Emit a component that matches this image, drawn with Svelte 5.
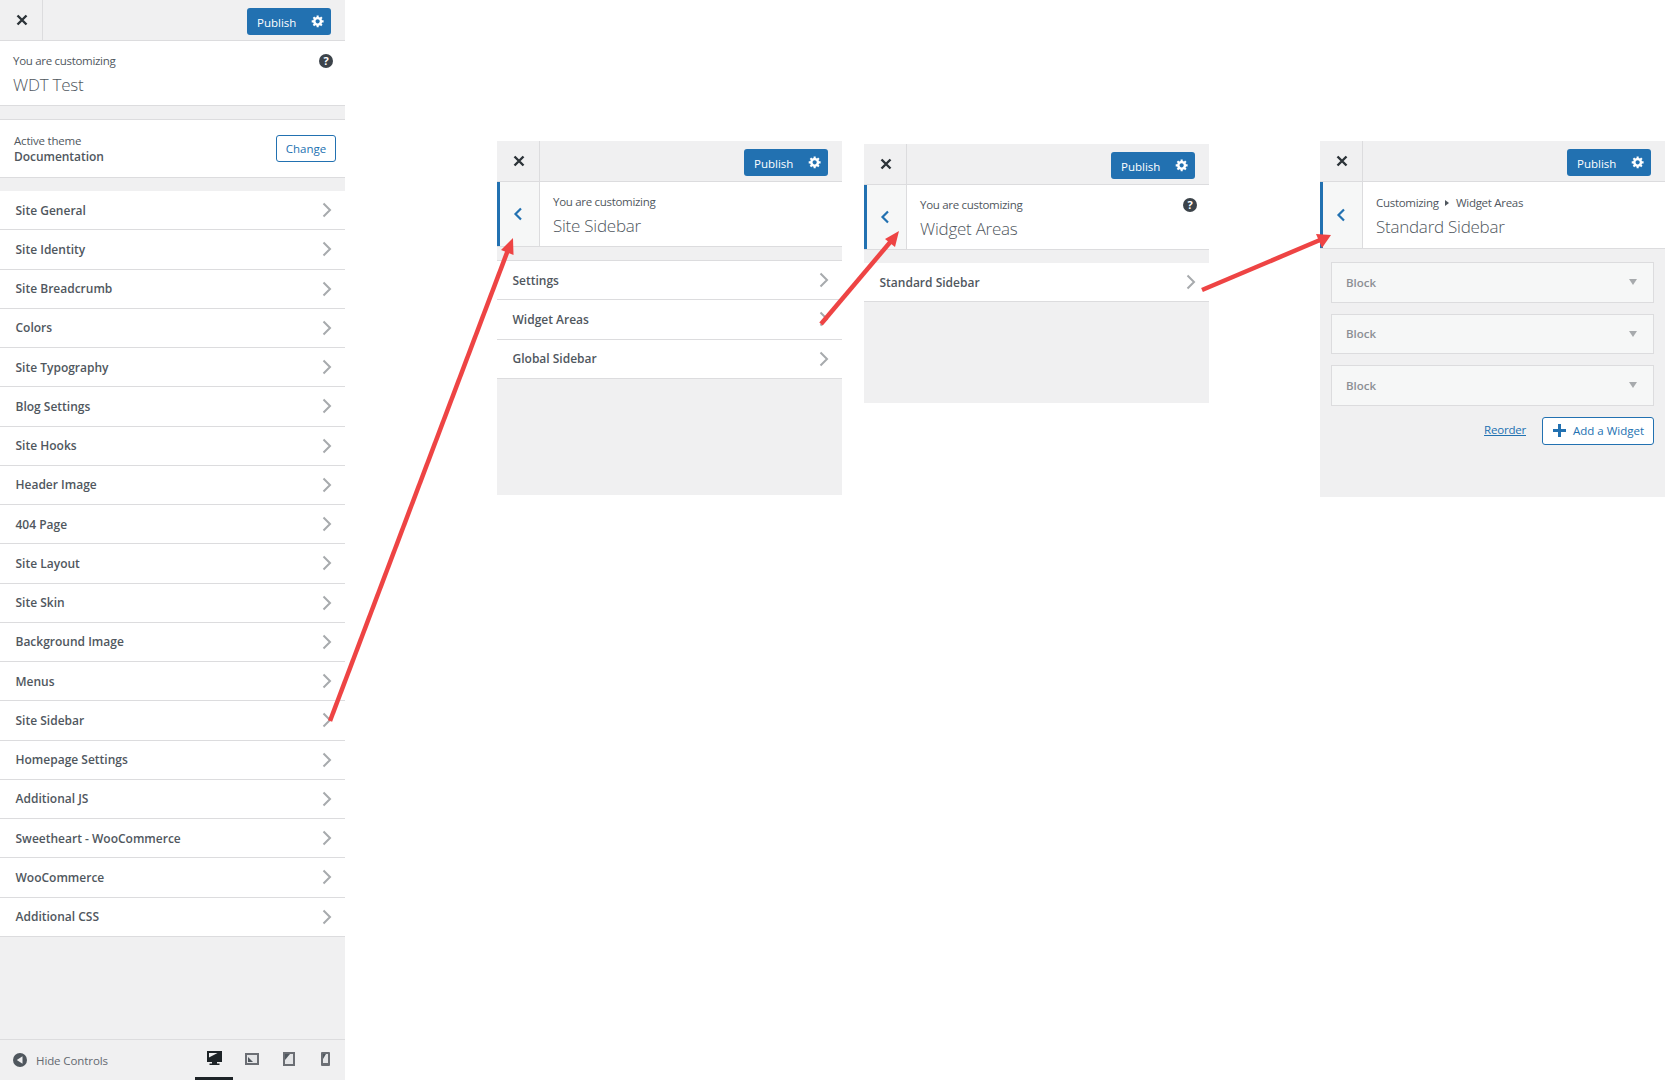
<script>
  const mainRows = ['Site General','Site Identity','Site Breadcrumb','Colors','Site Typography','Blog Settings','Site Hooks','Header Image','404 Page','Site Layout','Site Skin','Background Image','Menus','Site Sidebar','Homepage Settings','Additional JS','Sweetheart - WooCommerce','WooCommerce','Additional CSS'];
  const sidebarRows = ['Settings','Widget Areas','Global Sidebar'];
  const gear = 'M18 12h-2.18c-.17.7-.44 1.35-.81 1.93l1.54 1.54-2.1 2.1-1.54-1.54c-.58.36-1.23.63-1.91.79V19H8v-2.18c-.68-.16-1.33-.43-1.91-.79l-1.54 1.54-2.12-2.12 1.54-1.54c-.36-.58-.63-1.23-.79-1.91H1V9.03h2.17c.16-.7.44-1.35.8-1.94L2.43 5.55l2.1-2.1 1.54 1.54c.58-.37 1.24-.64 1.93-.81V2h3v2.18c.68.16 1.33.43 1.91.79l1.54-1.54 2.12 2.12-1.54 1.54c.36.59.64 1.24.8 1.94H18V12zm-8.5 1.5c1.66 0 3-1.34 3-3s-1.34-3-3-3-3 1.34-3 3 1.34 3 3 3z';
</script>

{#snippet header()}
  <div class="header">
    <div class="close">
      <svg width="12" height="12" viewBox="0 0 12 12"><path d="M1.500 1.500l9 9M10.500 1.500l-9 9" stroke="#2c3338" stroke-width="2.4" fill="none"/></svg>
    </div>
    <div class="publish">
      <span>Publish</span>
      <svg width="14" height="14" viewBox="0 0 20 20"><path d={gear} fill="#fff"/></svg>
    </div>
  </div>
{/snippet}

{#snippet back()}
  <div class="back">
    <svg width="10" height="14" viewBox="0 0 10 14"><path d="M8 1.500L2.500 7 8 12.500" stroke="#2271b1" stroke-width="2.200" fill="none"/></svg>
  </div>
{/snippet}

{#snippet rows(items)}
  <ul class="rows">
    {#each items as item}
      <li class="row">
        <span>{item}</span>
        <svg width="10" height="16" viewBox="0 0 10 16"><path d="M1.500 1.500L8 8l-6.500 6.500" stroke="#a7aaad" stroke-width="2" fill="none"/></svg>
      </li>
    {/each}
  </ul>
{/snippet}

<div class="page">
  <section class="panel main">
    {@render header()}
    <div class="info plain">
      <div class="info-text">
        <div class="small">You are customizing</div>
        <div class="title">WDT Test</div>
      </div>
      <span class="help">?</span>
    </div>
    <div class="theme">
      <div>
        <div class="small">Active theme</div>
        <div class="theme-name">Documentation</div>
      </div>
      <div class="change">Change</div>
    </div>
    <div class="main-rows">{@render rows(mainRows)}</div>
    <div class="footer">
      <div class="hide">
        <svg width="14" height="14" viewBox="0 0 14 14"><circle cx="7" cy="7" r="7" fill="#50575e"/><path d="M9.500 3.200v7.600L3.800 7z" fill="#f0f0f1"/></svg>
        <span>Hide Controls</span>
      </div>
      <div class="devices">
        <div class="device active">
          <svg width="15" height="15" viewBox="0 0 15 15"><path d="M0 0h15v11h-5v1.500h2.500V14h-10v-1.500H5V11H0z" fill="#1d2327"/><path d="M2 2h8.500L2 6.500z" fill="#f0f0f1"/></svg>
        </div>
        <div class="device">
          <svg width="14" height="12" viewBox="0 0 14 12"><rect width="14" height="12" fill="#6b6e74"/><rect x="2" y="2" width="10" height="8" fill="#e4e5e7"/><path d="M3 4l5 5H3z" fill="#50575e"/></svg>
        </div>
        <div class="device">
          <svg width="12" height="14" viewBox="0 0 12 14"><rect width="12" height="14" fill="#6b6e74"/><rect x="2" y="2" width="8" height="10" fill="#e4e5e7"/><path d="M2 2h5l-5 6z" fill="#50575e"/></svg>
        </div>
        <div class="device">
          <svg width="9" height="14" viewBox="0 0 9 14"><rect width="9" height="14" rx="1" fill="#6b6e74"/><rect x="2" y="2" width="5" height="9" fill="#e4e5e7"/><path d="M2 2h3L2 7z" fill="#50575e"/></svg>
        </div>
      </div>
    </div>
  </section>

  <section class="panel step sidebar">
    {@render header()}
    <div class="info">
      {@render back()}
      <div class="info-text">
        <div class="small">You are customizing</div>
        <div class="title">Site Sidebar</div>
      </div>
    </div>
    <div class="gap"></div>
    {@render rows(sidebarRows)}
  </section>

  <section class="panel step areas">
    {@render header()}
    <div class="info">
      {@render back()}
      <div class="info-text">
        <div class="small">You are customizing</div>
        <div class="title">Widget Areas</div>
      </div>
      <span class="help">?</span>
    </div>
    <div class="gap"></div>
    {@render rows(['Standard Sidebar'])}
  </section>

  <section class="panel step widgets">
    {@render header()}
    <div class="info">
      {@render back()}
      <div class="info-text">
        <div class="small">Customizing <i class="crumb"></i> Widget Areas</div>
        <div class="title">Standard Sidebar</div>
      </div>
    </div>
    <div class="blocks">
      {#each [0, 1, 2] as b}
        <div class="block"><span>Block</span><i class="caret"></i></div>
      {/each}
      <div class="actions">
        <span class="reorder">Reorder</span>
        <div class="add">
          <svg width="13" height="13" viewBox="0 0 13 13"><path d="M5 0h3v5h5v3H8v5H5V8H0V5h5z" fill="#2271b1"/></svg>
          <span>Add a Widget</span>
        </div>
      </div>
    </div>
  </section>

  <svg class="arrows" width="1665" height="1080" viewBox="0 0 1665 1080">
    <g stroke="#ee4444" stroke-width="4.500" fill="none">
      <path d="M330 721L508 250"/>
      <path d="M821 324L892 240"/>
      <path d="M1202 290L1320 240"/>
    </g>
    <g fill="#ee4444">
      <path d="M513 238L513.500 255 501 250z"/>
      <path d="M899 231L895 247 885 239z"/>
      <path d="M1331 235L1322 248 1316 234z"/>
    </g>
  </svg>
</div>

<style>
  :global(body) {
    background: #fff;
    font-family: "Open Sans", "Noto Sans", sans-serif;
    color: #50575e;
  }
  .page {
    position: relative;
    display: flex;
    align-items: flex-start;
    width: 1665px;
    height: 1080px;
    overflow: hidden;
  }
  .panel {
    width: 345px;
    background: #f0f0f1;
    display: flex;
    flex-direction: column;
    flex: none;
  }
  .main { height: 1080px; }
  .sidebar { margin: 141px 0 0 152px; height: 354px; }
  .areas { margin: 144px 0 0 22px; height: 259px; }
  .widgets { margin: 141px 0 0 111px; height: 356px; }

  .header {
    display: flex;
    justify-content: space-between;
    align-items: center;
    height: 41px;
    box-sizing: border-box;
    border-bottom: 1px solid #dcdcde;
    padding-right: 14px;
    flex: none;
  }
  .close {
    width: 43px;
    height: 40px;
    box-sizing: border-box;
    border-right: 1px solid #dcdcde;
    padding-left: 1px;
    display: flex;
    align-items: center;
    justify-content: center;
  }
  .publish {
    width: 84px;
    height: 27px;
    margin-top: 3px;
    box-sizing: border-box;
    background: #2271b1;
    border-radius: 3px;
    color: #fff;
    font-size: 11.500px;
    display: flex;
    align-items: center;
    justify-content: space-between;
    padding: 0 6px 0 10px;
  }
  .publish span { padding-top: 2px; }
  .publish svg { margin-bottom: 1px; }
  .info {
    display: flex;
    background: #fff;
    height: 65px;
    box-sizing: border-box;
    border-bottom: 1px solid #dcdcde;
    position: relative;
    flex: none;
  }
  .widgets .info { height: 67px; }
  .widgets .info-text { padding-top: 12px; }
  .info-text { padding: 11px 0 0 13px; }
  .back {
    width: 43px;
    flex: none;
    box-sizing: border-box;
    background: #f6f7f7;
    border-left: 3px solid #2271b1;
    border-right: 1px solid #dcdcde;
    display: flex;
    align-items: center;
    justify-content: center;
    padding-right: 4px;
    padding-bottom: 1px;
  }
  .small { font-size: 11.500px; letter-spacing: -0.3px; line-height: 18px; }
  .title { font-size: 17px; font-weight: 300; letter-spacing: -0.25px; line-height: 26px; margin-top: 2px; color: #50575e; }
  .help {
    position: absolute;
    top: 13px;
    right: 12px;
    width: 14px;
    height: 14px;
    border-radius: 50%;
    background: #3c434a;
    color: #fff;
    font-size: 11px;
    font-weight: 700;
    line-height: 14px;
    text-align: center;
  }
  .theme {
    margin-top: 13px;
    height: 59px;
    box-sizing: border-box;
    background: #fff;
    border-top: 1px solid #dcdcde;
    border-bottom: 1px solid #dcdcde;
    display: flex;
    justify-content: space-between;
    align-items: center;
    padding: 0 9px 0 14px;
  }
  .theme .small { line-height: 16px; letter-spacing: -0.2px; }
  .theme-name { font-size: 12px; font-weight: 600; letter-spacing: -0.05px; line-height: 16px; color: #50575e; }
  .change {
    width: 60px;
    height: 27px;
    box-sizing: border-box;
    border: 1px solid #2271b1;
    border-radius: 3px;
    color: #2271b1;
    background: #fff;
    font-size: 11.500px;
    display: flex;
    align-items: center;
    justify-content: center;
  }
  .main-rows { margin-top: 13px; }
  .gap { height: 13px; flex: none; }
  .rows { list-style: none; margin: 0; padding: 0; }
  .row {
    height: 39.250px;
    box-sizing: border-box;
    background: #fff;
    border-bottom: 1px solid #dcdcde;
    display: flex;
    justify-content: space-between;
    align-items: center;
    padding: 0 13px 0 15.500px;
    font-size: 12px;
    font-weight: 600;
    color: #50575e;
  }
  .sidebar .rows { border-top: 1px solid #dcdcde; }
  .footer {
    margin-top: auto;
    height: 41px;
    box-sizing: border-box;
    border-top: 1px solid #dcdcde;
    display: flex;
    justify-content: space-between;
    align-items: center;
  }
  .hide {
    display: flex;
    align-items: center;
    gap: 9px;
    padding-left: 13px;
    font-size: 11.500px;
    letter-spacing: -0.1px;
    color: #646970;
  }
  .devices { display: flex; height: 100%; padding-right: 1px; }
  .device {
    width: 37px;
    height: 100%;
    box-sizing: border-box;
    display: flex;
    align-items: center;
    justify-content: center;
    padding-bottom: 2px;
  }
  .device.active { width: 38px; border-bottom: 3px solid #1d2327; padding-bottom: 0; }
  .crumb {
    display: inline-block;
    width: 0;
    height: 0;
    margin: 0 4px 1px;
    border-left: 4px solid #50575e;
    border-top: 3px solid transparent;
    border-bottom: 3px solid transparent;
  }
  .blocks {
    padding: 13px 11px 0;
    display: flex;
    flex-direction: column;
    gap: 11px;
  }
  .block {
    height: 40.500px;
    box-sizing: border-box;
    border: 1px solid #dcdcde;
    background: #f6f7f7;
    display: flex;
    justify-content: space-between;
    align-items: center;
    padding: 0 16px 0 14px;
    font-size: 11.500px;
    font-weight: 600;
    color: #8c8f94;
  }
  .caret {
    width: 0;
    height: 0;
    border-top: 6px solid #a7aaad;
    border-left: 4px solid transparent;
    border-right: 4px solid transparent;
  }
  .actions {
    display: flex;
    justify-content: flex-end;
    align-items: center;
    gap: 16px;
  }
  .reorder { color: #2271b1; font-size: 11.500px; letter-spacing: -0.2px; text-decoration: underline; margin-bottom: 2px; }
  .add {
    width: 112px;
    height: 28px;
    box-sizing: border-box;
    border: 1px solid #2271b1;
    border-radius: 3px;
    background: #fff;
    color: #2271b1;
    font-size: 11.500px;
    display: flex;
    align-items: center;
    gap: 7px;
    padding-left: 10px;
  }
  .arrows { position: absolute; left: 0; top: 0; pointer-events: none; }
</style>
